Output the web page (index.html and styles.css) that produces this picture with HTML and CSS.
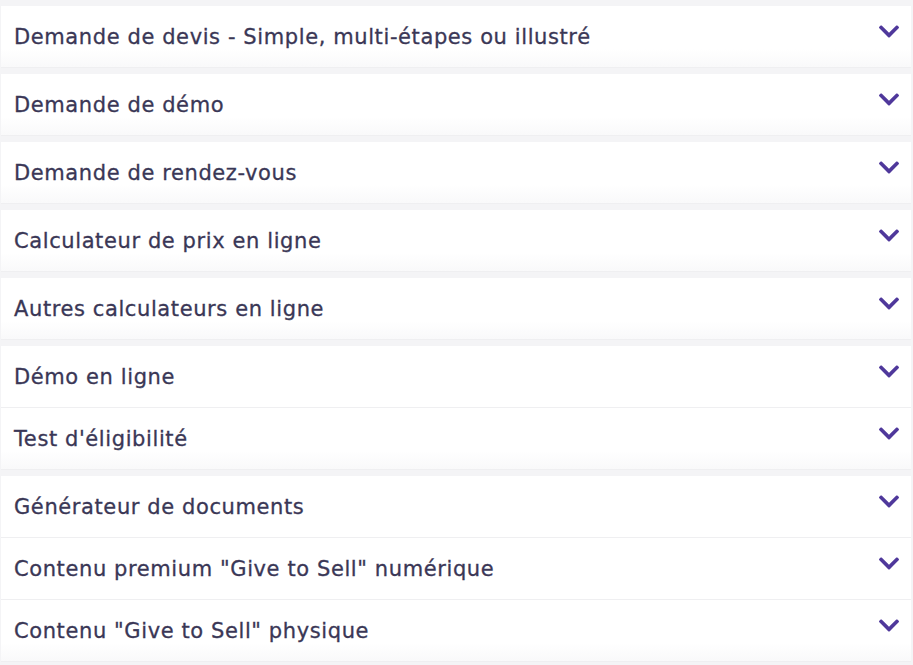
FILE: index.html
```html
<!DOCTYPE html>
<html lang="fr">
<head>
  <meta charset="UTF-8" />
  <meta name="viewport" content="width=device-width, initial-scale=1.0"/>
  <title>Cas d'usage</title>
  <link rel="stylesheet" href="styles.css">
</head>
<body>

  <div class="accordion">

    <div class="group">
      <div class="item"><span>Demande de devis - Simple, multi-étapes ou illustré</span>
        <svg class="chevron" viewBox="5 120 438 272"><path d="M207.029 381.476L12.686 187.132c-9.373-9.373-9.373-24.569 0-33.941l22.667-22.667c9.357-9.357 24.522-9.375 33.901-.04L224 284.505l154.745-154.021c9.379-9.335 24.544-9.317 33.901.04l22.667 22.667c9.373 9.373 9.373 24.569 0 33.941L240.971 381.476c-9.373 9.372-24.569 9.372-33.942 0z"/></svg>
      </div>
    </div>

    <div class="group">
      <div class="item"><span>Demande de démo</span>
        <svg class="chevron" viewBox="5 120 438 272"><path d="M207.029 381.476L12.686 187.132c-9.373-9.373-9.373-24.569 0-33.941l22.667-22.667c9.357-9.357 24.522-9.375 33.901-.04L224 284.505l154.745-154.021c9.379-9.335 24.544-9.317 33.901.04l22.667 22.667c9.373 9.373 9.373 24.569 0 33.941L240.971 381.476c-9.373 9.372-24.569 9.372-33.942 0z"/></svg>
      </div>
    </div>

    <div class="group">
      <div class="item"><span>Demande de rendez-vous</span>
        <svg class="chevron" viewBox="5 120 438 272"><path d="M207.029 381.476L12.686 187.132c-9.373-9.373-9.373-24.569 0-33.941l22.667-22.667c9.357-9.357 24.522-9.375 33.901-.04L224 284.505l154.745-154.021c9.379-9.335 24.544-9.317 33.901.04l22.667 22.667c9.373 9.373 9.373 24.569 0 33.941L240.971 381.476c-9.373 9.372-24.569 9.372-33.942 0z"/></svg>
      </div>
    </div>

    <div class="group">
      <div class="item"><span>Calculateur de prix en ligne</span>
        <svg class="chevron" viewBox="5 120 438 272"><path d="M207.029 381.476L12.686 187.132c-9.373-9.373-9.373-24.569 0-33.941l22.667-22.667c9.357-9.357 24.522-9.375 33.901-.04L224 284.505l154.745-154.021c9.379-9.335 24.544-9.317 33.901.04l22.667 22.667c9.373 9.373 9.373 24.569 0 33.941L240.971 381.476c-9.373 9.372-24.569 9.372-33.942 0z"/></svg>
      </div>
    </div>

    <div class="group">
      <div class="item"><span>Autres calculateurs en ligne</span>
        <svg class="chevron" viewBox="5 120 438 272"><path d="M207.029 381.476L12.686 187.132c-9.373-9.373-9.373-24.569 0-33.941l22.667-22.667c9.357-9.357 24.522-9.375 33.901-.04L224 284.505l154.745-154.021c9.379-9.335 24.544-9.317 33.901.04l22.667 22.667c9.373 9.373 9.373 24.569 0 33.941L240.971 381.476c-9.373 9.372-24.569 9.372-33.942 0z"/></svg>
      </div>
    </div>

    <div class="group">
      <div class="item"><span>Démo en ligne</span>
        <svg class="chevron" viewBox="5 120 438 272"><path d="M207.029 381.476L12.686 187.132c-9.373-9.373-9.373-24.569 0-33.941l22.667-22.667c9.357-9.357 24.522-9.375 33.901-.04L224 284.505l154.745-154.021c9.379-9.335 24.544-9.317 33.901.04l22.667 22.667c9.373 9.373 9.373 24.569 0 33.941L240.971 381.476c-9.373 9.372-24.569 9.372-33.942 0z"/></svg>
      </div>
      <div class="item"><span>Test d'éligibilité</span>
        <svg class="chevron" viewBox="5 120 438 272"><path d="M207.029 381.476L12.686 187.132c-9.373-9.373-9.373-24.569 0-33.941l22.667-22.667c9.357-9.357 24.522-9.375 33.901-.04L224 284.505l154.745-154.021c9.379-9.335 24.544-9.317 33.901.04l22.667 22.667c9.373 9.373 9.373 24.569 0 33.941L240.971 381.476c-9.373 9.372-24.569 9.372-33.942 0z"/></svg>
      </div>
    </div>

    <div class="group">
      <div class="item"><span>Générateur de documents</span>
        <svg class="chevron" viewBox="5 120 438 272"><path d="M207.029 381.476L12.686 187.132c-9.373-9.373-9.373-24.569 0-33.941l22.667-22.667c9.357-9.357 24.522-9.375 33.901-.04L224 284.505l154.745-154.021c9.379-9.335 24.544-9.317 33.901.04l22.667 22.667c9.373 9.373 9.373 24.569 0 33.941L240.971 381.476c-9.373 9.372-24.569 9.372-33.942 0z"/></svg>
      </div>
      <div class="item"><span>Contenu premium "Give to Sell" numérique</span>
        <svg class="chevron" viewBox="5 120 438 272"><path d="M207.029 381.476L12.686 187.132c-9.373-9.373-9.373-24.569 0-33.941l22.667-22.667c9.357-9.357 24.522-9.375 33.901-.04L224 284.505l154.745-154.021c9.379-9.335 24.544-9.317 33.901.04l22.667 22.667c9.373 9.373 9.373 24.569 0 33.941L240.971 381.476c-9.373 9.372-24.569 9.372-33.942 0z"/></svg>
      </div>
      <div class="item"><span>Contenu "Give to Sell" physique</span>
        <svg class="chevron" viewBox="5 120 438 272"><path d="M207.029 381.476L12.686 187.132c-9.373-9.373-9.373-24.569 0-33.941l22.667-22.667c9.357-9.357 24.522-9.375 33.901-.04L224 284.505l154.745-154.021c9.379-9.335 24.544-9.317 33.901.04l22.667 22.667c9.373 9.373 9.373 24.569 0 33.941L240.971 381.476c-9.373 9.372-24.569 9.372-33.942 0z"/></svg>
      </div>
    </div>

  </div>

</body>
</html>
```

FILE: styles.css
```css
body {
  font-family: 'DejaVu Sans', 'Open Sans', sans-serif;
  margin: 0;
  padding: 0;
  background-color: #f4f4f6;
}

.accordion {
  padding: 6px 2px 0 1px;
}

.group {
  margin-bottom: 6px;
  background-color: #fff;
}

.item {
  display: flex;
  justify-content: space-between;
  align-items: center;
  height: 61px;
  padding: 0 12px 0 13px;
  border-bottom: 1px solid #efeff1;
  background: linear-gradient(to bottom, #fff 70%, #f9f9fa 100%);
  color: #3a3756;
  font-size: 21px;
  letter-spacing: 0.6px;
  -webkit-text-stroke: 0.3px #3a3756;
}

.group .item:not(:last-child) {
  background: #fff;
}

.chevron {
  width: 20px;
  height: 13px;
  fill: #4f389b;
  margin-top: -11px;
}
```
